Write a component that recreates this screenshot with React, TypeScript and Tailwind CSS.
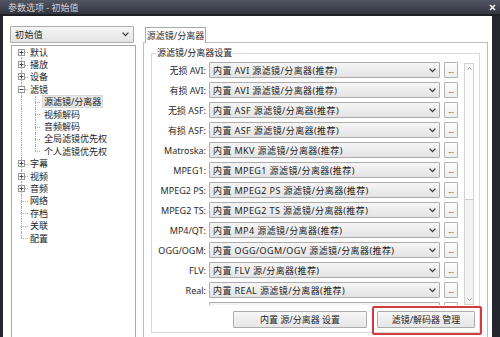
const font = "font-['Noto_Sans','Noto_Sans_CJK_SC',sans-serif]";

const rows: [string, string][] = [
  ["无损 AVI:", "内置 AVI 源滤镜/分离器(推荐)"],
  ["有损 AVI:", "内置 AVI 源滤镜/分离器(推荐)"],
  ["无损 ASF:", "内置 ASF 源滤镜/分离器(推荐)"],
  ["有损 ASF:", "内置 ASF 源滤镜/分离器(推荐)"],
  ["Matroska:", "内置 MKV 源滤镜/分离器(推荐)"],
  ["MPEG1:", "内置 MPEG1 源滤镜/分离器(推荐)"],
  ["MPEG2 PS:", "内置 MPEG2 PS 源滤镜/分离器(推荐)"],
  ["MPEG2 TS:", "内置 MPEG2 TS 源滤镜/分离器(推荐)"],
  ["MP4/QT:", "内置 MP4 源滤镜/分离器(推荐)"],
  ["OGG/OGM:", "内置 OGG/OGM/OGV 源滤镜/分离器(推荐)"],
  ["FLV:", "内置 FLV 源/分离器(推荐)"],
  ["Real:", "内置 REAL 源滤镜/分离器(推荐)"],
  ["", ""],
];

type Node = { label: string; kind: "plus" | "minus" | "leaf" | "child"; first?: boolean; last?: boolean; lastChild?: boolean; selected?: boolean };

const tree: Node[] = [
  { label: "默认", kind: "plus", first: true },
  { label: "播放", kind: "plus" },
  { label: "设备", kind: "plus" },
  { label: "滤镜", kind: "minus" },
  { label: "源滤镜/分离器", kind: "child", selected: true },
  { label: "视频解码", kind: "child" },
  { label: "音频解码", kind: "child" },
  { label: "全局滤镜优先权", kind: "child" },
  { label: "个人滤镜优先权", kind: "child", lastChild: true },
  { label: "字幕", kind: "plus" },
  { label: "视频", kind: "plus" },
  { label: "音频", kind: "plus" },
  { label: "网络", kind: "leaf" },
  { label: "存档", kind: "leaf" },
  { label: "关联", kind: "leaf" },
  { label: "配置", kind: "leaf", last: true },
];

function Chevron() {
  return (
    <svg width="7" height="5" viewBox="0 0 7 5">
      <path d="M0.6 0.6 L3.5 3.6 L6.4 0.6" fill="none" stroke="#3a3a3a" strokeWidth="1.3" />
    </svg>
  );
}

function Expander({ open }: { open: boolean }) {
  return (
    <div className="relative z-10 w-[7px] h-[7px] border border-[#9a9a9a] bg-white flex items-center justify-center">
      <svg width="5" height="5" viewBox="0 0 5 5">
        <path d="M0.5 2.5 H4.5" stroke="#4a4a4a" strokeWidth="1" />
        {!open && <path d="M2.5 0.5 V4.5" stroke="#4a4a4a" strokeWidth="1" />}
      </svg>
    </div>
  );
}

function TreeRow({ n }: { n: Node }) {
  const child = n.kind === "child";
  return (
    <div className="flex items-center h-[12.4px] pl-[2px]">
      {/* top-level gutter */}
      <div className="relative w-[14px] h-full flex items-center justify-center">
        {!n.last && !n.first && <div className="absolute left-[7px] top-0 bottom-0 border-l border-dotted border-[#a8a8a8]" />}
        {n.first && <div className="absolute left-[7px] top-1/2 bottom-0 border-l border-dotted border-[#a8a8a8]" />}
        {n.last && <div className="absolute left-[7px] top-0 h-1/2 border-l border-dotted border-[#a8a8a8]" />}
        {!child && <div className="absolute left-[7px] right-0 top-1/2 border-t border-dotted border-[#a8a8a8]" />}
        {(n.kind === "plus" || n.kind === "minus") && <Expander open={n.kind === "minus"} />}
      </div>
      {child && (
        <div className="relative w-[14px] h-full">
          <div className={`absolute left-[7px] top-0 border-l border-dotted border-[#a8a8a8] ${n.lastChild ? "h-1/2" : "bottom-0"}`} />
          <div className="absolute left-[7px] w-[5px] top-1/2 border-t border-dotted border-[#a8a8a8]" />
        </div>
      )}
      <span className={`ml-[1px] px-[1px] leading-[11px] whitespace-nowrap ${n.selected ? "bg-[#e6e6e6] outline outline-1 outline-[#d8d8d8]" : ""}`}>{n.label}</span>
    </div>
  );
}

function Combo({ text, className }: { text: string; className?: string }) {
  return (
    <div className={`h-[16px] border border-[#acacac] rounded-[1px] bg-gradient-to-b from-[#f6f6f6] to-[#e3e3e3] flex items-center justify-between pl-[3px] pr-[3px] ${className ?? ""}`}>
      <span className="whitespace-nowrap leading-none tracking-[0.4px]">{text}</span>
      <Chevron />
    </div>
  );
}

function Button({ text, className }: { text: string; className?: string }) {
  return (
    <div className={`h-[17px] border border-[#adadad] rounded-[1px] bg-gradient-to-b from-[#f7f7f7] to-[#e6e6e6] flex items-center justify-center whitespace-nowrap leading-none ${className ?? ""}`}>
      {text}
    </div>
  );
}

export default function App() {
  return (
    <div className={`w-[500px] h-[337px] overflow-hidden bg-[#26272e] flex flex-col text-[9px] text-[#222] ${font}`}>
      {/* title bar */}
      <div className="h-[14px] bg-gradient-to-b from-[#525563] to-[#33353f] flex items-center justify-between pl-[8px] pr-[4px] shrink-0">
        <span className="text-[#d4d4d8] leading-none">参数选项 - 初始值</span>
        <svg width="7" height="7" viewBox="0 0 7 7">
          <path d="M1 1 L6 6 M6 1 L1 6" stroke="#f2f2f2" strokeWidth="1.6" />
        </svg>
      </div>
      <div className="h-[2px] bg-[#1e1f25] shrink-0" />
      <div className="flex-1 flex pl-[3px] pr-[8px] min-h-0">
        <div className="flex-1 bg-white flex pl-[7px] pt-[10px] min-h-0">
          {/* left column */}
          <div className="w-[126px] flex flex-col">
            <Combo text="初始值" className="h-[17px] w-[124px] pl-[4px] pr-[4px]" />
            <div className="mt-[2px] ml-[1px] flex-1 border border-[#a9a9a9] border-b-0 bg-white">
              {tree.map((n, i) => (
                <TreeRow key={i} n={n} />
              ))}
            </div>
          </div>

          {/* right column */}
          <div className="ml-[7px] w-[345px] flex flex-col pt-[1px]">
            <div className="ml-[2px] w-[61px] h-[16px] border border-[#a9a9a9] border-b-0 bg-white flex items-center justify-center relative z-10 -mb-px text-[#2b2b2b]">
              源滤镜/分离器
            </div>
            <div className="flex-1 border border-[#bdbdbd] border-b-0 pl-[7px] pr-[7px] pt-[10px]">
              <div className="relative h-[280px] border border-[#d9d9d9]">
                <span className="absolute left-[4px] -top-[7px] bg-white px-[1px] leading-[12px] text-[#222]">源滤镜/分离器设置</span>

                <div className="flex pt-[6px]">
                  <div className="w-[306px] h-[245px] overflow-hidden flex flex-col">
                    {rows.map(([label, value], i) => (
                      <div key={i} className="h-[20px] shrink-0 flex items-center">
                        <div className="w-[55px] text-right pr-[1px] whitespace-nowrap leading-none text-[#2a2a2a]">{label}</div>
                        <Combo text={value} className="ml-[2px] w-[231px]" />
                        <div className="ml-[4px] w-[14px] h-[16px] border border-[#b3b3b3] rounded-[1px] bg-gradient-to-b from-[#fdfdfd] to-[#efefef] flex items-end justify-center pb-[3px] text-[7px] leading-none text-[#444]">
                          {label ? "..." : ""}
                        </div>
                      </div>
                    ))}
                  </div>
                  <div className="ml-[6px] mt-[3px] w-[10px] h-[242px] border border-[#d4d4d4] bg-[#f3f3f3] flex flex-col justify-between">
                    <div className="h-[136px] border-b border-[#cfcfcf] bg-[#fbfbfb] flex justify-center pt-[3px]">
                      <svg width="5" height="3" viewBox="0 0 5 3">
                        <path d="M0.5 2.5 L2.5 0.5 L4.5 2.5" fill="none" stroke="#9a9a9a" strokeWidth="1" />
                      </svg>
                    </div>
                    <div className="flex justify-center pb-[3px]">
                      <svg width="5" height="3" viewBox="0 0 5 3">
                        <path d="M0.5 0.5 L2.5 2.5 L4.5 0.5" fill="none" stroke="#9a9a9a" strokeWidth="1" />
                      </svg>
                    </div>
                  </div>
                </div>

                <div className="flex justify-end gap-[10px] pr-[4px] mt-[6px]">
                  <Button text="内置 源/分离器 设置" className="w-[134px]" />
                  <div className="relative">
                    <Button text="滤镜/解码器 管理" className="w-[98px]" />
                    <div className="absolute -left-[5px] -right-[7px] -top-[5px] -bottom-[7px] border-2 border-[#d33a3f] rounded-[2px]" />
                  </div>
                </div>
              </div>
            </div>
          </div>
        </div>
      </div>
    </div>
  );
}
